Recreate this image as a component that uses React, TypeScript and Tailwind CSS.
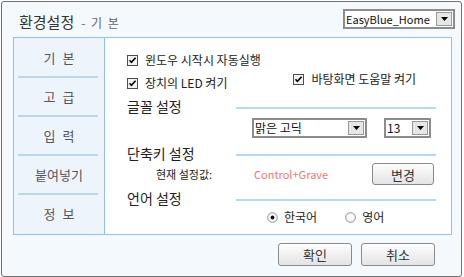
import React from "react";

/* ─── small controls ─── */

function CheckBox({ label }: { label: string }) {
  return (
    <div className="flex h-[14px] items-center">
      <svg width="11" height="11" viewBox="0 0 11 11" className="shrink-0">
        <rect x="0.5" y="0.5" width="10" height="10" fill="#f2f2f2" stroke="#4d4d4d" />
        <path d="M2.5 5.2 L4.4 7.4 L8.6 2.8" fill="none" stroke="#000" strokeWidth="1.6" />
      </svg>
      <span className="ml-[7px] text-[12px] leading-none text-[#222]">{label}</span>
    </div>
  );
}

function Radio({ label, checked }: { label: string; checked?: boolean }) {
  return (
    <div className="flex h-[14px] items-center">
      <svg width="11" height="11" viewBox="0 0 11 11" className="shrink-0">
        <circle cx="5.5" cy="5.5" r="4.8" fill="#fbfbfb" stroke="#8c8c8c" />
        {checked && <circle cx="5.5" cy="5.5" r="1.9" fill="#111" />}
      </svg>
      <span className="ml-[6px] text-[12px] leading-none text-[#222]">{label}</span>
    </div>
  );
}

function Select({ value, className, textSize = "text-[12px]" }: { value: string; className: string; textSize?: string }) {
  return (
    <div className={`flex h-[20px] items-stretch border-2 border-[#8c8c8c] bg-white ${className}`}>
      <span className={`flex flex-1 items-center overflow-hidden whitespace-nowrap pl-[1px] leading-none text-[#111] ${textSize}`}>
        {value}
      </span>
      <div className="my-[1px] mr-[1px] flex w-[16px] shrink-0 items-center justify-center border border-[#9a9a9a] bg-[#e6e6e6]">
        <svg width="7" height="4" viewBox="0 0 7 4">
          <path d="M0 0 L7 0 L3.5 4 Z" fill="#000" />
        </svg>
      </div>
    </div>
  );
}

function Button({ label, className }: { label: string; className: string }) {
  return (
    <div
      className={`flex items-center justify-center rounded-[3px] border border-[#8a8a8a] bg-gradient-to-b from-[#fdfdfd] to-[#e4e4e4] text-[13px] leading-none text-[#333] ${className}`}
    >
      {label}
    </div>
  );
}

function Heading({ label }: { label: string }) {
  return (
    <div className="flex h-[20px] items-center pr-[15px]">
      <span className="text-[14px] leading-none text-[#222]">{label}</span>
      <div className="ml-auto mt-[4px] h-[2px] w-[200px] bg-[#b9d7f0]" />
    </div>
  );
}

/* ─── sidebar ─── */

const TABS = ["기 본", "고 급", "입 력", "붙여넣기", "정 보"];

function Sidebar() {
  return (
    <div className="flex w-[91px] shrink-0 flex-col border-r border-[#93c0ea] bg-[#eef4fc] pt-[1px]">
      {TABS.map((t, i) => (
        <React.Fragment key={t}>
          {i > 0 && <div className="ml-[4px] mr-[6px] h-[2px] bg-[#b9d7f0]" />}
          <div className="flex h-[37px] items-center justify-center text-[13px] leading-none text-[#555] [word-spacing:4px]">
            {t}
          </div>
        </React.Fragment>
      ))}
    </div>
  );
}

/* ─── content ─── */

function Content() {
  return (
    <div className="flex flex-1 flex-col bg-white pl-[22px] pt-[15px]">
      <CheckBox label="윈도우 시작시 자동실행" />
      <div className="flex h-[23px] items-start">
        <div className="mt-[9px]">
          <CheckBox label="장치의 LED 켜기" />
        </div>
        <div className="ml-[66px] mt-[5px]">
          <CheckBox label="바탕화면 도움말 켜기" />
        </div>
      </div>

      <div className="mt-[6px]">
        <Heading label="글꼴 설정" />
      </div>
      <div className="mt-[2px] flex">
        <Select value="맑은 고딕" className="ml-[125px] w-[115px]" />
        <Select value="13" className="ml-[17px] w-[47px]" />
      </div>

      <div className="mt-[5px]">
        <Heading label="단축키 설정" />
      </div>
      <div className="flex h-[22px] items-center">
        <span className="ml-[29px] w-[98px] text-[11px] leading-none text-[#222]">현재 설정값:</span>
        <span className="text-[11px] leading-none text-[#f07878]">Control+Grave</span>
        <Button label="변경" className="ml-auto mr-[17px] h-[22px] w-[62px]" />
      </div>

      <div className="mt-[3px]">
        <Heading label="언어 설정" />
      </div>
      <div className="mt-[2px] flex">
        <div className="ml-[140px]">
          <Radio label="한국어" checked />
        </div>
        <div className="ml-[28px]">
          <Radio label="영어" />
        </div>
      </div>
    </div>
  );
}

/* ─── dialog ─── */

export default function App() {
  return (
    <div
      className="h-[277px] w-[464px] overflow-hidden bg-white pl-[1px] pt-[1px]"
      style={{ fontFamily: '"Noto Sans CJK KR", "Noto Sans", sans-serif' }}
    >
      <div className="flex h-[276px] w-[461px] flex-col rounded-[3px] border border-[#707070] bg-[#f4f9fd]">
        {/* header */}
        <div className="flex h-[35px] items-start">
          <div className="mt-[12px] flex items-baseline pl-[17px]">
            <span className="text-[15px] leading-none text-[#333]">환경설정</span>
            <span className="ml-[7px] text-[12px] leading-none text-[#666] [word-spacing:3px]">- 기 본</span>
          </div>
          <div className="ml-auto mr-[6px] mt-[7px]">
            <Select value="EasyBlue_Home" className="w-[112px]" textSize="text-[11px]" />
          </div>
        </div>

        {/* panel */}
        <div className="ml-[11px] mr-[9px] flex h-[198px] border border-[#93c0ea]">
          <Sidebar />
          <Content />
        </div>

        {/* footer */}
        <div className="mt-[8px] flex justify-end gap-[9px] pr-[26px]">
          <Button label="확인" className="h-[23px] w-[74px]" />
          <Button label="취소" className="h-[23px] w-[74px]" />
        </div>
      </div>
    </div>
  );
}
